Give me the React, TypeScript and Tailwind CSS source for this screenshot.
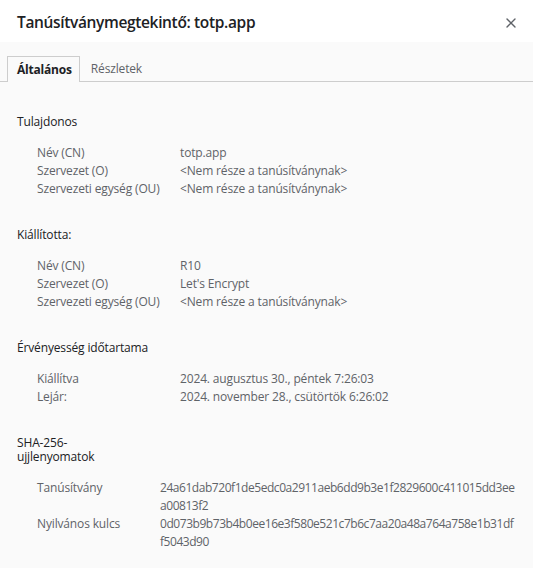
import { X } from "lucide-react";

const font = { fontFamily: '"Open Sans", "Noto Sans", sans-serif' };

type Row = { label: string; value: string[] };

function Section({ title, rows, labelW }: { title: string; rows: Row[]; labelW: string }) {
  return (
    <div className="mb-[30px]">
      <h2 className="text-[12px] leading-[14px] text-[#202124] tracking-[-0.15px]">{title}</h2>
      <div className="mt-[15px] pl-[20px]">
        {rows.map((r) => (
          <div key={r.label} className="flex text-[12px] leading-[18px] text-[#5f6368] tracking-[-0.15px]">
            <div className={labelW + " shrink-0"}>{r.label}</div>
            <div>
              {r.value.map((v, i) => (
                <div key={i}>{v}</div>
              ))}
            </div>
          </div>
        ))}
      </div>
    </div>
  );
}

export default function App() {
  return (
    <div className="w-[533px] h-[568px] overflow-hidden bg-[#fafafa]" style={font}>
      <div className="h-[42px] bg-white flex items-center justify-between pl-[17px] pr-[14px] pt-[4px]">
        <h1 className="text-[15.5px] font-semibold text-[#202124] tracking-[-0.35px]">
          Tanúsítványmegtekintő: totp.app
        </h1>
        <X className="w-[16px] h-[16px] text-[#5f6368]" strokeWidth={2} />
      </div>

      <div className="pt-[14px] border-b border-[#cdcdcd] flex pl-[7px]">
        <div className="h-[26px] -mb-px pl-[9px] pr-[7px] flex items-center border border-b-0 border-[#cdcdcd] bg-[#fafafa] text-[12px] font-bold text-[#202124] tracking-[-0.2px]">
          Általános
        </div>
        <div className="h-[25px] px-[11px] flex items-center text-[12px] text-[#5f6368] tracking-[-0.15px]">
          Részletek
        </div>
      </div>

      <div className="pl-[17px] pt-[33px]">
        <Section
          title="Tulajdonos"
          labelW="w-[143px]"
          rows={[
            { label: "Név (CN)", value: ["totp.app"] },
            { label: "Szervezet (O)", value: ["<Nem része a tanúsítványnak>"] },
            { label: "Szervezeti egység (OU)", value: ["<Nem része a tanúsítványnak>"] },
          ]}
        />
        <Section
          title="Kiállította:"
          labelW="w-[143px]"
          rows={[
            { label: "Név (CN)", value: ["R10"] },
            { label: "Szervezet (O)", value: ["Let's Encrypt"] },
            { label: "Szervezeti egység (OU)", value: ["<Nem része a tanúsítványnak>"] },
          ]}
        />
        <Section
          title="Érvényesség időtartama"
          labelW="w-[143px]"
          rows={[
            { label: "Kiállítva", value: ["2024. augusztus 30., péntek 7:26:03"] },
            { label: "Lejár:", value: ["2024. november 28., csütörtök 6:26:02"] },
          ]}
        />
        <div className="mb-[30px]">
          <h2 className="max-w-[110px] text-[12px] leading-[14px] text-[#202124] tracking-[-0.15px]">
            SHA-256-ujjlenyomatok
          </h2>
          <div className="mt-[15px] pl-[20px]">
            {[
              {
                label: "Tanúsítvány",
                value: ["24a61dab720f1de5edc0a2911aeb6dd9b3e1f2829600c411015dd3ee", "a00813f2"],
              },
              {
                label: "Nyilvános kulcs",
                value: ["0d073b9b73b4b0ee16e3f580e521c7b6c7aa20a48a764a758e1b31df", "f5043d90"],
              },
            ].map((r) => (
              <div key={r.label} className="flex text-[12px] leading-[18px] text-[#5f6368]">
                <div className="w-[123px] shrink-0 tracking-[-0.15px]">{r.label}</div>
                <div className="whitespace-nowrap tracking-[-0.45px]">
                  {r.value.map((v, i) => (
                    <div key={i}>{v}</div>
                  ))}
                </div>
              </div>
            ))}
          </div>
        </div>
      </div>
    </div>
  );
}
